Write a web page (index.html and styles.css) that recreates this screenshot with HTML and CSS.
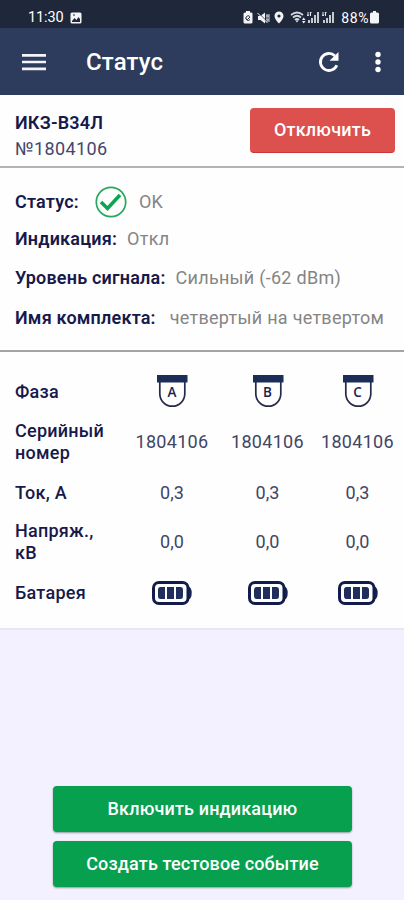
FILE: index.html
```html
<!DOCTYPE html>
<html lang="ru">
<head>
<meta charset="utf-8">
<meta name="viewport" content="width=device-width, initial-scale=1">
<title>Статус</title>
<link rel="stylesheet" href="styles.css">
</head>
<body>
<svg class="defs" width="0" height="0" aria-hidden="true">
  <symbol id="sensor" viewBox="0 0 32 34">
    <path d="M3.800 7v11.700a12.500 12.500 0 0 0 25 0V7" fill="#fff" stroke="#25294a" stroke-width="1.700"/>
    <path d="M1 0h30.500v7.500H1z" fill="#1c2d58"/>
  </symbol>
  <symbol id="battery" viewBox="0 0 40 24">
    <path d="M36 5q3.700 1.500 3.700 7T36 19z" fill="#172452"/>
    <rect x="1.500" y="1.500" width="34.500" height="21" rx="5.500" fill="#fff" stroke="#111c4b" stroke-width="3"/>
    <path d="M8.500 6H13v12H8.500Q6 18 6 15V9q0-3 2.500-3zM15 6h7v12h-7zM24 6h4.500q2.500 0 2.500 3v6q0 3-2.500 3H24z" fill="#1f2e5a"/>
  </symbol>
  <symbol id="signal" viewBox="0 0 13 13">
    <path d="M1 1v4M3.500 1v4M0 3.500 1 5l1-1.500M3 2l.5-1 1 1" stroke="#e4e6eb" fill="none"/>
    <path d="M1 9h2v3H1zM4 7h2v5H4zM7 4h2v8H7zM10 1h2v11h-2z" fill="#c5c9d1"/>
  </symbol>
</svg>
<header>
  <div class="statusbar">
    <span class="time">11:30</span>
    <svg class="photo" width="12" height="12" viewBox="0 0 12 12"><rect x=".5" y=".5" width="11" height="11" rx="1.500" fill="#f3f4f6"/><path d="m2 9 2.500-3 2 2L8.500 5 10 7v3H2z" fill="#1f2840"/><path d="M3 3h2" stroke="#1f2840"/></svg>
    <span class="tray">
      <svg width="10" height="13" viewBox="0 0 10 13"><path d="M3 0h4v1.500h1.500Q9.500 1.500 9.500 3v8q0 1.500-1.500 1.500H2Q.5 12.500.5 11V3q0-1.500 1.500-1.500h1z" fill="#f3f4f6"/><path d="M6.800 5.500A2.300 2.300 0 1 0 7 8.500M3.500 7.500l1 1L7 6" fill="none" stroke="#1f2840"/></svg>
      <svg class="mute" width="13" height="12" viewBox="0 0 13 12"><path d="M1 4h2.500L8 .5v11L3.500 8H1z" fill="#f3f4f6"/><path d="M10 2v8M12 2v8M9 4h3M9 8h3" stroke="#d5d8de"/><path d="m1.500 1 8 8" stroke="#1f2840"/><path d="m.5 1 10 10" stroke="#f3f4f6"/></svg>
      <svg class="pin" width="10" height="13" viewBox="0 0 10 13"><path d="M5 .5a4.500 4.500 0 0 0-4.500 4.500C.5 8 5 12.500 5 12.500S9.500 8 9.500 5A4.500 4.500 0 0 0 5 .5z" fill="#f3f4f6"/><circle cx="5" cy="5" r="1.600" fill="#1f2840"/></svg>
      <svg class="wifi" width="17" height="13" viewBox="0 0 17 13"><path d="M1 4q6-5 12 0M3 6.500q4-3.500 8 0M5 9q2-2 4 0" fill="none" stroke="#d5d8de" stroke-width="1.700"/><path d="M5.500 9.500h3L7 11.500z" fill="#f3f4f6"/><path d="m12 9 1.700-2.500L15.500 9zM12 10h3.500l-1.800 2.500z" fill="#f3f4f6"/></svg>
      <svg width="13" height="13"><use href="#signal"/></svg>
      <svg class="sig2" width="13" height="13"><use href="#signal"/></svg>
      <span class="percent">88%</span>
      <svg width="9" height="13" viewBox="0 0 9 13"><path d="M3 0h3v1.500h1.500Q9 1.500 9 3v8q0 1.500-1.500 1.500h-6Q0 12.500 0 11V3q0-1.500 1.500-1.500H3z" fill="#f3f4f6"/></svg>
    </span>
  </div>
  <div class="appbar">
    <svg width="24" height="18" viewBox="0 0 24 18"><path d="M0 2.300h24M0 9h24M0 15.800h24" stroke="#f4f4fa" stroke-width="2.700"/></svg>
    <h1>Статус</h1>
    <svg class="refresh" width="22" height="22" viewBox="0 0 22 22"><path d="M18.800 14.200A8.500 8.500 0 1 1 16.800 4.800" fill="none" stroke="#fff" stroke-width="2.800"/><path d="M20.500 1v8.800h-9z" fill="#fff"/></svg>
    <svg width="8" height="22" viewBox="0 0 8 22"><g fill="#fff"><circle cx="4" cy="3.500" r="2.700"/><circle cx="4" cy="11" r="2.700"/><circle cx="4" cy="18.500" r="2.700"/></g></svg>
  </div>
</header>
<main>
  <section class="device">
    <div>
      <div class="name">ИКЗ-В34Л</div>
      <div class="number">№1804106</div>
    </div>
    <button class="disconnect">Отключить</button>
  </section>
  <dl class="info">
    <div class="state"><dt>Статус:</dt><dd><svg width="32" height="32" viewBox="0 0 32 32"><circle cx="16" cy="16" r="14.700" fill="none" stroke="#26a75c" stroke-width="1.700"/><path d="m6 16 6.500 6.500L25 9" fill="none" stroke="#0da650" stroke-width="3.600"/></svg><span>OK</span></dd></div>
    <div class="indication"><dt>Индикация:</dt><dd>Откл</dd></div>
    <div class="level"><dt>Уровень сигнала:</dt><dd>Сильный (-62 dBm)</dd></div>
    <div class="kit"><dt>Имя комплекта:</dt><dd>четвертый на четвертом</dd></div>
  </dl>
  <section class="phases">
    <span class="label">Фаза</span>
    <span class="phase"><svg><use href="#sensor"/></svg><b>A</b></span>
    <span class="phase"><svg><use href="#sensor"/></svg><b>B</b></span>
    <span class="phase"><svg><use href="#sensor"/></svg><b>C</b></span>
    <span class="label">Серийный номер</span><span class="serial">1804106</span><span class="serial">1804106</span><span class="serial">1804106</span>
    <span class="label">Ток, А</span><span>0,3</span><span>0,3</span><span>0,3</span>
    <span class="label">Напряж., кВ</span><span>0,0</span><span>0,0</span><span>0,0</span>
    <span class="label">Батарея</span>
    <svg class="battery"><use href="#battery"/></svg>
    <svg class="battery"><use href="#battery"/></svg>
    <svg class="battery"><use href="#battery"/></svg>
  </section>
</main>
<footer>
  <button class="indicate">Включить индикацию</button>
  <button class="test">Создать тестовое событие</button>
</footer>
</body>
</html>
```
FILE: styles.css
```css
* { box-sizing: border-box; }
body {
  margin: 0;
  height: 900px;
  display: flex;
  flex-direction: column;
  background: #f3f1ff;
  color: #17194a;
  font: 18px/22px Roboto, sans-serif;
  overflow: hidden;
}
svg { display: block; flex: none; }
.defs { position: absolute; }
header { background: #2d3b5d; color: #fff; }
.statusbar {
  height: 28px;
  padding: 7px 25px 0 28px;
  display: flex;
  align-items: center;
  background: #1f273b;
  font-size: 14.5px;
}
.time { letter-spacing: -.1px; }
.photo { margin-left: 6px; }
.tray { display: flex; align-items: center; margin-left: auto; }
.mute { margin-left: 4px; }
.pin { margin-left: 4px; }
.wifi { margin-left: 6px; }
.sig2 { margin-left: 2px; }
.percent { margin: 0 1px 0 6px; font-size: 14px; letter-spacing: .6px; }
.appbar {
  height: 67px;
  padding: 0 22px;
  display: flex;
  align-items: center;
}
h1 { margin: 0 0 0 40px; font-size: 24px; line-height: 30px; font-weight: 500; letter-spacing: .15px; }
.refresh { margin: 0 34px 0 auto; }
main { background: #fefefe; border-bottom: 2px solid #e8e6f0; }
.device {
  height: 73px;
  padding: 0 9px 0 15px;
  display: flex;
  justify-content: space-between;
  border-bottom: 2px solid #b2b3b3;
}
.name { margin-top: 17px; font-weight: 600; letter-spacing: .2px; }
.number { margin-top: 4px; color: #45476b; letter-spacing: .4px; }
button {
  padding: 0;
  border: 0;
  border-radius: 4px;
  color: #fff;
  font: 500 18px/22px Roboto, sans-serif;
}
.disconnect {
  width: 145px;
  height: 45px;
  margin-top: 13px;
  background: #dc504d;
  border-bottom: 1px solid #c83636;
  letter-spacing: .2px;
}
.info {
  height: 184px;
  margin: 0;
  padding: 14px 15px 0;
  display: grid;
  grid-template-rows: 40px 34px 44px 36px;
  align-items: center;
  border-bottom: 2px solid #a3a4a6;
}
.info > div { display: flex; align-items: center; white-space: nowrap; }
dt { font-weight: 600; letter-spacing: .2px; }
dd { margin: 0 0 0 10px; display: flex; align-items: center; color: #858585; letter-spacing: .28px; }
.state dd { margin-left: 16px; gap: 12px; }
.kit dd { margin-left: 14px; }
.phases {
  height: 276px;
  padding: 14px 5px 0 15px;
  display: grid;
  grid-template-columns: 110px 94px 97px 83px;
  grid-template-rows: 52px 48px 54px 44px 58px;
  align-items: center;
  justify-items: center;
  color: #424565;
}
.label { width: 100px; justify-self: start; color: #17194a; font-weight: 500; letter-spacing: .25px; }
.serial { letter-spacing: .3px; }
.phase { display: grid; justify-items: center; }
.phase svg { grid-area: 1 / 1; width: 32px; height: 34px; }
.phase b { grid-area: 1 / 1; z-index: 1; margin-top: 6px; font: 600 13.5px/22px "Open Sans", sans-serif; color: #1b234d; }
.battery { width: 40px; height: 24px; }
footer {
  margin-top: auto;
  padding: 0 52px 13px 53px;
  display: flex;
  flex-direction: column;
  gap: 9px;
}
footer button { height: 46px; background: #07a04e; box-shadow: 0 1px 2px #8a9b9c; letter-spacing: .15px; }
```
